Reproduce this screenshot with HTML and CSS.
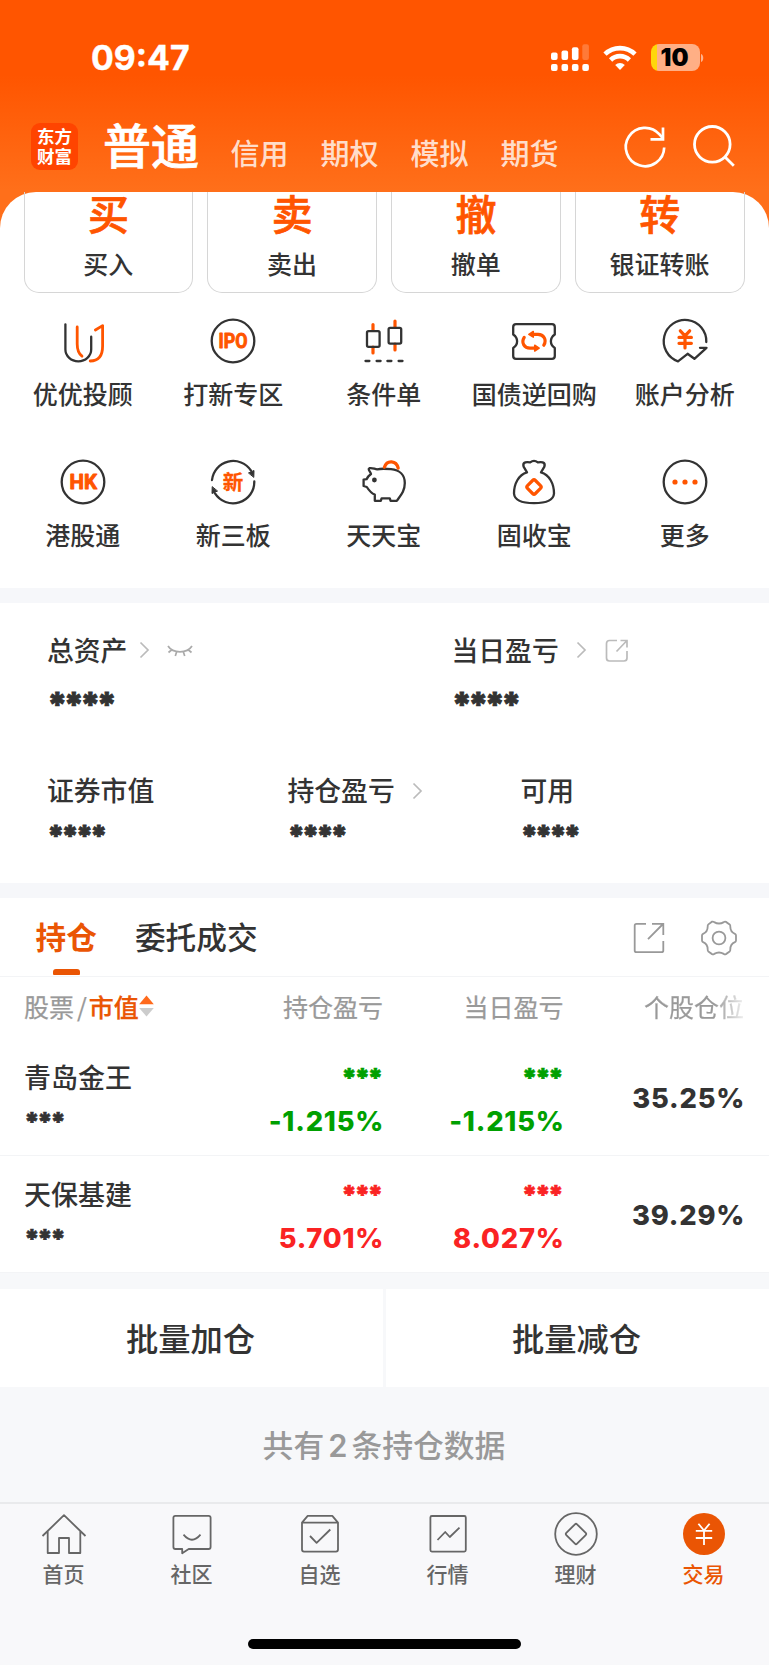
FILE: index.html
```html
<!DOCTYPE html>
<html lang="zh-CN">
<head>
<meta charset="utf-8">
<title>交易</title>
<link rel="stylesheet" href="styles.css">
</head>
<body>
<div class="hero">
  <div class="status">
    <span class="time">09:47</span>
    <div class="status-icons">
      <svg class="signal" width="38" height="28" viewBox="0 0 38 28" fill="#fff">
        <rect x="0" y="8.5" width="6.6" height="7.5" rx="2"/><rect x="10.5" y="6.5" width="6.6" height="9.5" rx="2"/><rect x="20.9" y="3.3" width="6.6" height="12.7" rx="2"/><rect x="31.3" y="0.3" width="6.6" height="15.7" rx="2" opacity=".22"/>
        <rect x="0" y="20" width="6.6" height="7" rx="2"/><rect x="10.5" y="20" width="6.6" height="7" rx="2"/><rect x="20.9" y="20" width="6.6" height="7" rx="2"/><rect x="31.3" y="20" width="6.6" height="7" rx="2"/>
      </svg>
      <svg class="wifi" width="34" height="26" viewBox="0 0 34 26" fill="none" stroke="#fff" stroke-width="4.6">
        <path d="M2 9.2A21.5 21.5 0 0 1 32 9.2"/><path d="M7.6 15A13.4 13.4 0 0 1 26.4 15"/><path d="M17 25L12.2 20A7 7 0 0 1 21.8 20Z" fill="#fff" stroke="none"/>
      </svg>
      <div class="battery"><span>10</span></div>
      <svg width="4" height="10" viewBox="0 0 4 10"><path d="M1 1C4 2 4 8 1 9Z" fill="#fff" opacity=".55"/></svg>
    </div>
  </div>
  <div class="nav">
    <div class="logo">东方<br>财富</div>
    <div class="title">普通</div>
    <div class="subtabs"><span>信用</span><span>期权</span><span>模拟</span><span>期货</span></div>
    <div class="nav-icons">
      <svg width="46" height="46" viewBox="-23 -23 46 46" fill="none" stroke="#fff" stroke-width="2.7"><path d="M19.2 0.5A19.2 19.2 0 1 1 14.5 -12.6L18 -8.6"/><path d="M18 -19.5V-7.7H5.5"/></svg>
      <svg width="46" height="46" viewBox="-23 -23 46 46" fill="none" stroke="#fff" stroke-width="2.8"><circle cx="-1.7" cy="-2.7" r="17.8"/><path d="M11 10L19.8 18.8"/></svg>
    </div>
  </div>
  <div class="sheet">
    <div class="cards">
      <div class="card"><b>买</b><span>买入</span></div>
      <div class="card"><b>卖</b><span>卖出</span></div>
      <div class="card"><b>撤</b><span>撤单</span></div>
      <div class="card"><b>转</b><span>银证转账</span></div>
    </div>
    <div class="grid">
      <div class="cell"><svg class="ico" viewBox="-24 -24 48 48"><path d="M-17.6 -16.7V8.5A12.9 11.8 0 0 0 8.2 8.5V-4.3"/><g class="o thin"><path d="M-5.8 -14V3Q-5.8 11.5 -1 15.2"/><path d="M12.4 -11L19.6 -15.4V5Q19.6 20 7.2 20"/></g></svg><span>优优投顾</span></div>
      <div class="cell"><svg class="ico" viewBox="-24 -24 48 48"><circle r="21.3"/><text class="t" x="-14.5" y="7" textLength="29" lengthAdjust="spacingAndGlyphs">IPO</text></svg><span>打新专区</span></div>
      <div class="cell"><svg class="ico" viewBox="-24 -24 48 48"><g class="o"><path d="M-11 -16.5V-11M-11 6V12M11 -20V-14M11 3V9"/></g><rect x="-17" y="-9.8" width="12.6" height="15.6" rx="1.5"/><rect x="4.6" y="-13.2" width="12.6" height="15.8" rx="1.5"/><path d="M-18.5 20H-14.6M-7.4 20H-3.4M3.4 20H7.4M14.6 20H18.5"/></svg><span>条件单</span></div>
      <div class="cell"><svg class="ico" viewBox="-24 -24 48 48"><path d="M-18 -16.8H18Q20.8 -16.8 20.8 -14V-6.5C15.6 -3 15.6 3.6 20.8 7V15Q20.8 17.8 18 17.8H-18Q-20.8 17.8 -20.8 15V7C-15.6 3.6 -15.6 -3 -20.8 -6.5V-14Q-20.8 -16.8 -18 -16.8Z"/><g class="o"><path d="M-9.8 -3.6C-13.2 2 -9.5 7.2 -4 7.2H1.5"/><path d="M9.8 4.2C13.2 -1.4 9.5 -6.6 4 -6.6H-1.5"/><path class="tip" d="M0.7 4.2L5.2 7.2L0.7 10Z"/><path class="tip" d="M-.7 -9.6L-5.2 -6.6L-.7 -3.8Z"/></g></svg><span>国债逆回购</span></div>
      <div class="cell"><svg class="ico" viewBox="-24 -24 48 48"><path d="M21.3 1A21.3 21.3 0 1 0 -7 20.3L2.6 12.8L9.4 17.8L21.5 6.8H15"/><g class="o"><path d="M-4.7 -10.2L0 -5.2L4.7 -10.2M0 -4V7M-6 -3.6H6.4M-6 2.3H6.4"/></g></svg><span>账户分析</span></div>
      <div class="cell"><svg class="ico" viewBox="-24 -24 48 48"><circle r="21.3"/><text class="t" x="-13.5" y="7" textLength="27.5" lengthAdjust="spacingAndGlyphs">HK</text></svg><span>港股通</span></div>
      <div class="cell"><svg class="ico" viewBox="-24 -24 48 48"><path d="M-21 -2A21.3 21.3 0 0 1 18 -11.4M21.3 -.5A21.3 21.3 0 0 1 -18 11.4"/><path d="M15.8 -9.2L21 -11.5L20.8 -5ZM-15.8 9.2L-21 11.5L-20.8 5Z" fill="#333" stroke-width="1"/><text class="xin" x="0" y="7.8">新</text></svg><span>新三板</span></div>
      <div class="cell"><svg class="ico" viewBox="-24 -24 48 48"><path d="M-13 -8C-13.6 -10.3 -16.6 -13 -14.6 -13.8C-12 -14.6 -9.6 -13 -6.8 -12.6C-3 -13.6 3 -13.2 7 -12.8C16 -12 20.8 -6.5 20.8 1C20.8 9 17 13 12.8 18.8H6.6L5.8 16.4H-2.4L-3.2 18.8H-9.2V12.6C-12.5 11.4 -14.5 9.2 -17.2 5L-20.4 4V-2.4L-17.4 -2.8C-16.5 -4.8 -15 -6.6 -13 -8Z"/><circle cx="-9.6" cy="-2" r="2.4" fill="#333" stroke="none"/><path class="o" d="M.4 -14.8C3 -22.4 12.4 -21.8 14.2 -13.8"/></svg><span>天天宝</span></div>
      <div class="cell"><svg class="ico" viewBox="-24 -24 48 48"><path d="M-7 -9.6L-10.4 -15.4C-12 -20.6 -6.5 -20.2 -3.8 -19.6Q0 -22.6 3.8 -19.6C6.5 -20.2 12 -20.6 10.4 -15.4L7 -9.6C15.5 -7.2 20 2 20 11.5C19.5 18 12 21.2 0 21.2S-19.5 18 -20 11.5C-20 2 -15.5 -7.2 -7 -9.6"/><rect class="o" x="-5.6" y="-5.6" width="11.2" height="11.2" rx="2" transform="translate(0 5) rotate(45)"/></svg><span>固收宝</span></div>
      <div class="cell"><svg class="ico" viewBox="-24 -24 48 48"><circle r="21.3"/><g fill="#f50" stroke="none"><circle cx="-10" r="2.6"/><circle r="2.6"/><circle cx="10" r="2.6"/></g></svg><span>更多</span></div>
    </div>
  </div>
</div>
<div class="assets">
  <div class="row main">
    <div class="item w1"><div class="lab">总资产<svg class="chev c1" width="11" height="18" viewBox="0 0 11 18"><path d="M1.5 1.5L9 9L1.5 16.5"/></svg><svg class="eye" width="28" height="14" viewBox="0 0 28 14"><path d="M1 1C6 8.8 20 8.8 25 1M4.5 5L1.5 7.5M9.5 7.2L8.3 11M16.5 7.2L17.7 11M21.5 5L24.5 7.5"/></svg></div><div class="stars big">****</div></div>
    <div class="item"><div class="lab">当日盈亏<svg class="chev c2" width="11" height="18" viewBox="0 0 11 18"><path d="M1.5 1.5L9 9L1.5 16.5"/></svg><svg class="exp" width="24" height="24" viewBox="0 0 24 24"><path d="M12 1.5H4.5Q1.5 1.5 1.5 4.5V19Q1.5 22 4.5 22H19Q22 22 22 19V12M15.5 1.5H22V8.5M22 1.5L11.5 12.5"/></svg></div><div class="stars big">****</div></div>
  </div>
  <div class="row sub">
    <div class="item w2"><div class="lab">证券市值</div><div class="stars">****</div></div>
    <div class="item w3"><div class="lab">持仓盈亏<svg class="chev c2" width="11" height="18" viewBox="0 0 11 18"><path d="M1.5 1.5L9 9L1.5 16.5"/></svg></div><div class="stars">****</div></div>
    <div class="item"><div class="lab">可用</div><div class="stars">****</div></div>
  </div>
</div>
<div class="holdings">
  <div class="tabs">
    <div class="tab on">持仓</div><div class="tab">委托成交</div>
    <div class="tools">
      <svg width="32" height="32" viewBox="-16 -16 32 32"><path d="M-3 -14.2H-12.5Q-14.3 -14.2 -14.3 -12.5V12.5Q-14.3 14.2 -12.5 14.2H12.5Q14.3 14.2 14.3 12.5V3M3 -14.2H14.3V-3M14 -14L-1 1.2"/></svg>
      <svg width="38" height="38" viewBox="-19 -19 38 38"><circle r="6.4"/><path d="M-7 -16.3Q-5.8 -16.6 -4.8 -15.9Q0 -13.1 4.8 -15.9Q5.8 -16.6 7 -16.1L10.6 -13.6Q11.5 -12.8 11.3 -11.5Q11.3 -6 15.9 -4.2Q17 -3.6 17 -2.4V2.4Q17 3.6 15.9 4.2Q11.3 6 11.3 11.5Q11.5 12.8 10.6 13.6L7 16.1Q5.8 16.6 4.8 15.9Q0 13.1 -4.8 15.9Q-5.8 16.6 -7 16.1L-10.6 13.6Q-11.5 12.8 -11.3 11.5Q-11.3 6 -15.9 4.2Q-17 3.6 -17 2.4V-2.4Q-17 -3.6 -15.9 -4.2Q-11.3 -6 -11.3 -11.5Q-11.5 -12.8 -10.6 -13.6Z"/></svg>
    </div>
  </div>
  <div class="line thead">
    <div class="name">股票<i>/</i><em>市值</em><svg width="15" height="22" viewBox="0 0 15 22"><path d="M7.5 .5L14.8 9.3H.2Z" fill="#ff6a1c"/><path d="M7.5 21.5L14.8 13H.2Z" fill="#ccc"/></svg></div>
    <div class="c">持仓盈亏</div><div class="c">当日盈亏</div><div class="c last">个股仓位</div>
  </div>
  <div class="line trow">
    <div class="name"><span>青岛金王</span><span class="stars s">***</span></div>
    <div class="c green"><span class="stars s">***</span><span class="num">-1.215%</span></div>
    <div class="c green"><span class="stars s">***</span><span class="num">-1.215%</span></div>
    <div class="c pos"><span class="num">35.25%</span></div>
  </div>
  <div class="line trow">
    <div class="name"><span>天保基建</span><span class="stars s">***</span></div>
    <div class="c red"><span class="stars s">***</span><span class="num">5.701%</span></div>
    <div class="c red"><span class="stars s">***</span><span class="num">8.027%</span></div>
    <div class="c pos"><span class="num">39.29%</span></div>
  </div>
</div>
<div class="batch"><div>批量加仓</div><div>批量减仓</div></div>
<div class="summary">共有<span>2</span>条持仓数据</div>
<div class="tabbar">
  <div class="ti"><svg viewBox="-24 -24 48 48"><path d="M-21.5 2L0 -18.8L21.5 2M-16.3 -2.5V19H-5V4H5V19H16.3V-2.5"/></svg><span>首页</span></div>
  <div class="ti"><svg viewBox="-24 -24 48 48"><path d="M-16.6 -18.2H16.6Q18.6 -18.2 18.6 -16.2V13Q18.6 15 16.6 15H-3.3L-9.8 19.3V15H-16.6Q-18.6 15 -18.6 13V-16.2Q-18.6 -18.2 -16.6 -18.2ZM-8.5 .7Q0 10.8 8.5 .7"/></svg><span>社区</span></div>
  <div class="ti"><svg viewBox="-24 -24 48 48"><path d="M-18 -11.4L-12.3 -18.2H12.3L18 -11.4V15.6Q18 17.6 16 17.6H-16Q-18 17.6 -18 15.6ZM-18 -11.4H18M-10 2L-3.4 8.8L10.3 -4.5"/></svg><span>自选</span></div>
  <div class="ti"><svg viewBox="-24 -24 48 48"><rect x="-17.6" y="-18" width="35.4" height="35.6" rx="1.5"/><path d="M-10.5 6L-2.8 -2L1.8 3L11.5 -6.4"/></svg><span>行情</span></div>
  <div class="ti"><svg viewBox="-24 -24 48 48"><circle r="20.8"/><rect x="-7.6" y="-7.6" width="15.2" height="15.2" rx="1.5" transform="rotate(45)"/></svg><span>理财</span></div>
  <div class="ti on"><svg viewBox="-24 -24 48 48"><circle r="21" fill="#ea5504" stroke="none"/><path stroke="#fff" d="M-5.6 -10.3L0 -3.5L5.6 -10.3M0 -3.5V11M-8.2 -3.2H8.2M-8.2 4H8.2"/></svg><span>交易</span></div>
</div>
<div class="homebar"><i></i></div>
</body>
</html>
```

FILE: styles.css
```css
* { box-sizing: border-box; }
body { margin: 0; width: 769px; height: 1665px; overflow: hidden; background: #f7f8fa; color: #333; font-family: "Noto Sans CJK SC", sans-serif; font-weight: 500; }
svg { display: block; flex: none; overflow: visible; }
i, em { font-style: normal; }
.hero { height: 588px; background: linear-gradient(#ff5500 0, #ff5500 75px, #ff6f1a 190px); }
.status { height: 115px; display: flex; justify-content: space-between; align-items: flex-start; padding: 43px 65px 0 91px; color: #fff; }
.time { font: 700 33.8px/30px Inter, sans-serif; -webkit-text-stroke: .4px; }
.status-icons { display: flex; align-items: center; height: 29px; }
.wifi { margin: 0 14px; }
.battery { width: 49px; height: 27px; border-radius: 8px; background: linear-gradient(90deg, #ffd60a 5.5px, #ffaf85 5.5px); color: #000; font: 900 24px/28px Inter, sans-serif; text-align: center; padding-right: 2px; }
.nav { height: 76.5px; display: flex; padding: 0 31px; color: #fff; }
.logo { width: 47px; height: 47px; margin-top: 8px; border-radius: 9px; background: #ff4400; text-align: center; padding-top: 3px; font-size: 17.5px; font-weight: 700; line-height: 19.5px; }
.title { margin-left: 25px; font-size: 48px; line-height: 57px; -webkit-text-stroke: .7px; }
.subtabs { display: flex; gap: 32px; margin-left: 31.5px; font-size: 29px; line-height: 40px; padding-top: 17px; color: rgba(255,255,255,.8); }
.nav-icons { display: flex; gap: 23px; margin: 9px 0 0 auto; padding-right: 1px; }
.sheet { height: 396.5px; background: #fff; border-radius: 36px 36px 0 0; }
.cards { display: grid; grid-template-columns: repeat(4, 1fr); gap: 14px; padding: 0 24.5px 0 23.5px; }
.card { height: 101px; border: 1px solid #d6d6d6; border-top: 0; border-radius: 0 0 15px 15px; text-align: center; }
.card b, .card span { display: block; }
.card b { color: #ff5500; font-size: 41px; font-weight: 500; line-height: 40px; height: 44px; -webkit-text-stroke: .7px; }
.card span { font-size: 25px; line-height: 30px; margin-top: 12px; }
.grid { display: grid; grid-template-columns: repeat(5, 1fr); padding: 24.5px 9px 0 7.5px; row-gap: 31px; }
.cell { display: flex; flex-direction: column; align-items: center; height: 110px; font-size: 25px; line-height: 30px; }
.cell span { margin-top: 13px; white-space: nowrap; }
.ico { width: 48px; height: 48px; fill: none; stroke: #333; stroke-width: 2.3; stroke-linecap: round; stroke-linejoin: round; }
.o { stroke: #ff5500; stroke-width: 3.2; }
.thin { stroke-width: 2.8; }
.tip { fill: #ff5500; stroke-width: 1.5; }
.t { fill: #ff5500; stroke: #ff5500; stroke-width: .9; font: 700 20px Roboto, sans-serif; }
.xin { fill: #ff5500; stroke: #ff5500; stroke-width: .3; font: 700 20.5px "Noto Sans CJK SC", sans-serif; text-anchor: middle; }
.assets { height: 310px; border: solid #f6f7fa; border-width: 15px 0; background: #fff; padding: 26.5px 0 0 47px; }
.row { display: flex; }
.lab { display: flex; align-items: center; font-size: 26.8px; line-height: 40px; height: 40px; white-space: nowrap; }
.w1 { width: 404.5px; }
.w2 { width: 240.5px; }
.w3 { width: 233px; }
.chev, .eye, .exp { fill: none; stroke: #bbb; stroke-width: 1.7; }
.chev { margin-top: 1px; }
.c1 { margin-left: 12px; }
.c2 { margin-left: 17px; }
.eye { margin: 5px 0 0 17px; stroke: #aaa; }
.exp { margin: 3px 0 0 18px; }
.stars { font: 900 29px/30px Inter, sans-serif; letter-spacing: -3.3px; display: block; height: 30px; -webkit-text-stroke: .8px; }
.stars.big { font-size: 34px; letter-spacing: -4.2px; margin-top: 20.5px; }
.sub { margin-top: 50px; }
.sub .stars { margin-top: 10.5px; }
.holdings { background: #fff; border-bottom: 1px solid #eef0f2; height: 375px; }
.tabs { height: 79px; display: flex; border-bottom: 1px solid #f3f4f6; padding: 0 31px 0 35.5px; font-size: 30.7px; line-height: 76px; }
.tab { margin-right: 38px; }
.tab.on { display: flex; flex-direction: column; align-items: center; color: #ea5504; font-weight: 700; }
.tab.on::after { content: ""; width: 27px; height: 6px; margin-top: -5px; border-radius: 3px 3px 1px 1px; background: #ea5504; flex: none; }
.tools { display: flex; align-items: center; gap: 35px; margin-left: auto; height: 79px; fill: none; stroke: #999; stroke-width: 1.8; }
.line { display: grid; grid-template-columns: 178.5px 180.5px 180.5px 180.5px; padding: 0 24px; }
.thead { height: 62px; color: #999; font-weight: 400; font-size: 25px; line-height: 58px; -webkit-text-stroke: .25px; }
.thead .name { display: flex; align-items: center; height: 58px; }
.thead i { margin: 0 2px 0 3px; }
.thead em { color: #ea5504; font-weight: 500; }
.thead svg { margin-left: 0; }
.c { text-align: right; }
.last { background: linear-gradient(90deg, #999 150px, #eee 180px); -webkit-background-clip: text; background-clip: text; color: transparent; }
.trow { height: 117px; border-bottom: 1px solid #f3f4f6; }
.trow .name { font-size: 27px; line-height: 40px; padding-top: 18px; }
.name span { display: block; }
.name .stars.s { margin-top: 10px; }
.trow .c { padding-top: 21px; }
.num { display: block; font: 800 27.3px/34px Inter, sans-serif; letter-spacing: .8px; margin-right: -1.2px; }
.stars.s { font-size: 26px; margin-top: 3px; letter-spacing: -2.7px; -webkit-text-stroke: .6px; }
.c .stars.s { margin-right: 2.3px; }
.trow .c .num { margin-top: 12px; }
.trow .pos { padding-top: 31px; }
.green { color: #00a000; }
.red { color: #fa2323; }
.batch { display: grid; grid-template-columns: 383px 1fr; gap: 3px; margin-top: 16px; height: 98px; text-align: center; font-size: 32.3px; line-height: 96px; }
.batch div { background: #fff; padding-right: 2px; }
.summary { height: 115px; text-align: center; color: #999; font-size: 30.8px; line-height: 113px; padding-right: 1px; }
.summary span { margin: 0 4px; font-family: Inter, sans-serif; font-weight: 600; }
.tabbar { height: 124px; border-top: 2px solid #e9eaec; background: #f8f8fa; display: grid; grid-template-columns: repeat(6, 1fr); padding: 6px 1px 0 0; }
.ti { display: flex; flex-direction: column; align-items: center; font-size: 21px; line-height: 28px; color: #666; }
.ti svg { width: 48px; height: 48px; fill: none; stroke: #666; stroke-width: 1.8; stroke-linejoin: round; }
.ti span { margin: 1px 1px 0 0; }
.ti.on { color: #ea5504; }
.homebar { background: #f8f8fa; height: 39px; padding: 13px 0 0 248px; }
.homebar i { display: block; width: 273px; height: 10px; border-radius: 5px; background: #000; }
```
